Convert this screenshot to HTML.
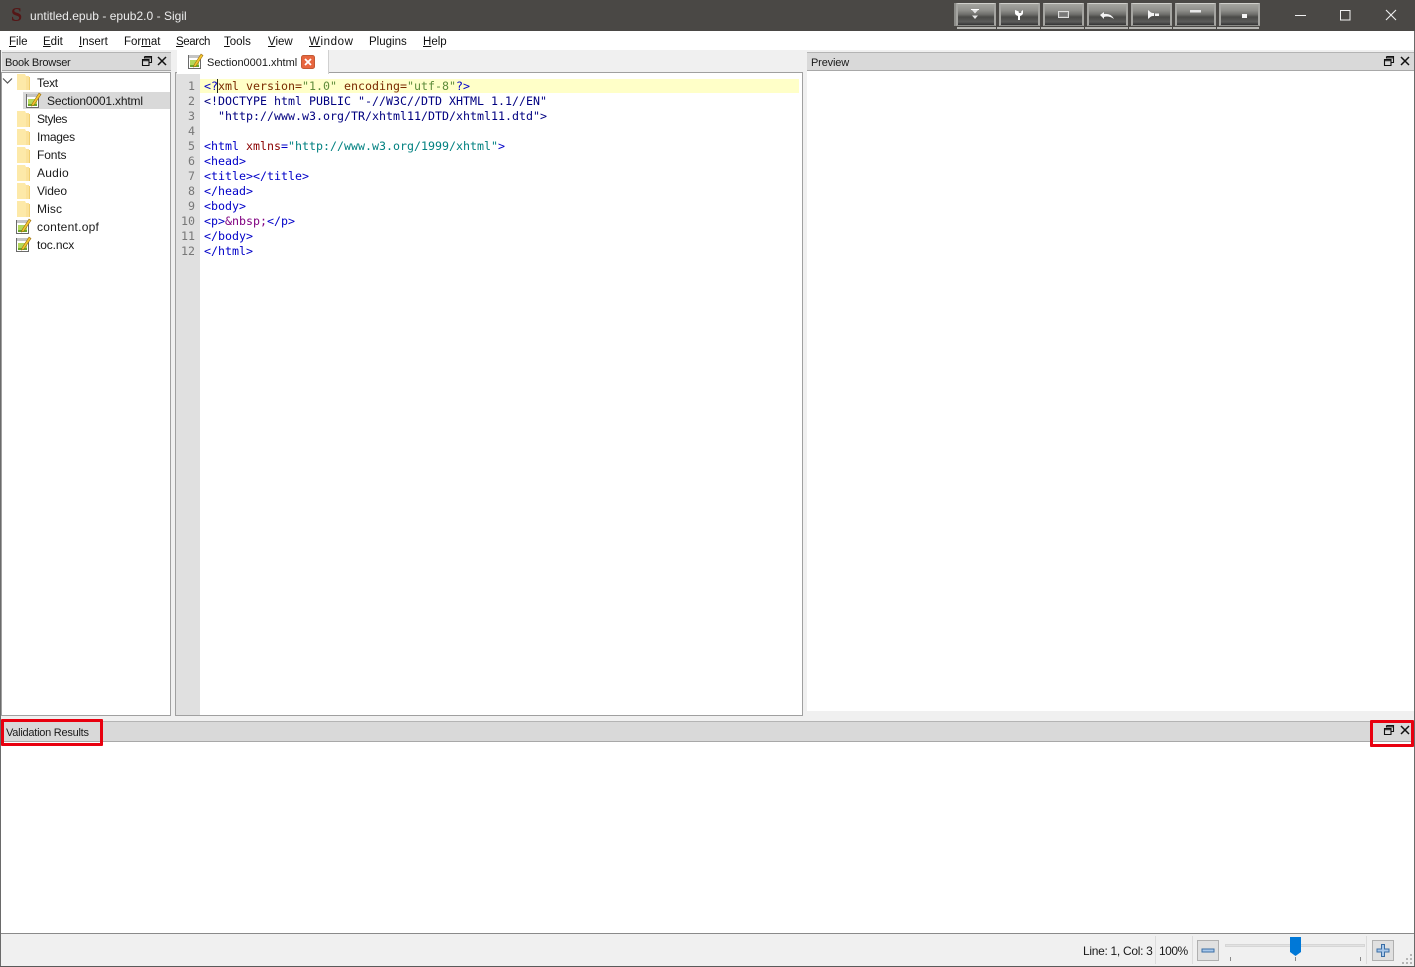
<!DOCTYPE html>
<html><head><meta charset="utf-8"><style>
html,body{margin:0;padding:0;width:1415px;height:967px;overflow:hidden;background:#f0f0f0;font-family:"Liberation Sans",sans-serif;font-size:12px;color:#1a1a1a}
.a{position:absolute}
.t{position:absolute;white-space:pre;line-height:16px;letter-spacing:-.12px}
.s{font-size:11px;letter-spacing:-.02px}
u{text-decoration:underline}
.m{position:absolute;top:34px;white-space:pre;line-height:16px;font-size:11.5px;color:#111}
.c{position:absolute;left:204px;white-space:pre;font-family:"DejaVu Sans Mono",monospace;font-size:11.63px;line-height:15px;color:#0000c8}
.n{position:absolute;left:176px;width:19px;text-align:right;font-family:"DejaVu Sans Mono",monospace;font-size:11.63px;line-height:15px;color:#777}
.r{color:#8a0000}.g{color:#008080}.o{color:#7a2a00}.v{color:#5f8c3a}.p{color:#800080}
.h{position:absolute;background:#d9d9d9;border-top:1px solid #b4b4b4;border-bottom:1px solid #a8a8a8}
.b{position:absolute;top:3px;height:23px;border:1px solid #8c8c88;border-top-color:#d0d0cc;border-left:2px solid #a5a5a1;border-right:2px solid #a5a5a1;box-sizing:border-box;background:linear-gradient(#a5a5a0 0,#8f8f8b 30%,#6e6e6b 50%,#4a4a48 62%,#5c5c5a 85%,#333 100%)}
.bs{position:absolute;top:27px;height:2px;background:#b5b5b1}
</style></head><body>
<svg width="0" height="0" style="position:absolute"><defs>
<symbol id="folder" viewBox="0 0 14 17"><path d="M0 1h8l1 2v14H0z" fill="#fde9a8"/><path d="M9 3l3 0v14H9z" fill="#fbe29a"/><path d="M12 4h1v13h-1z" fill="#f0cf72"/></symbol>
<symbol id="doc" viewBox="0 0 17 17"><path d="M1.500 2.500h12v13h-12z" fill="#fff" stroke="#6a6a6a"/><path d="M2 2h11v3H2z" fill="#c4c4c4"/><path d="M3 7h9v7H3z" fill="#b4d85a"/><path d="M3 12h9v2H3z" fill="#6ea52a"/><path d="M7 12l7-11 2 1.500-7 10.500-2.500 1z" fill="#f3c530" stroke="#9a6d10" stroke-width=".6"/></symbol>
<symbol id="fl" viewBox="0 0 12 12"><path d="M3.500 1.500h7v6h-2M3.500 1.500v2M3.500 2.800h7" fill="none" stroke="#111" stroke-width="1.100"/><path d="M1.500 4.500h6.500v6h-6.500z" fill="none" stroke="#111" stroke-width="1.100"/><path d="M1.500 5.700h6.500" stroke="#111"/></symbol>
<symbol id="cl" viewBox="0 0 12 12"><path d="M2 2l8 8M10 2l-8 8" stroke="#111" stroke-width="1.500"/></symbol>
</defs></svg>

<!-- title bar -->
<div class="a" style="left:0;top:0;width:1415px;height:31px;background:#4a4845"></div>
<div class="a" style="left:11px;top:5px;font-family:'Liberation Serif',serif;font-size:20px;line-height:20px;font-weight:bold;color:#551616">S</div>
<div class="t" style="left:30px;top:8px;color:#ececec;font-size:12px;letter-spacing:.02px">untitled.epub - epub2.0 - Sigil</div>

<div class="bs" style="left:957px;width:39px"></div><div class="bs" style="left:997px;width:43px"></div><div class="bs" style="left:1041px;width:43px"></div><div class="bs" style="left:1085px;width:43px"></div><div class="bs" style="left:1129px;width:43px"></div><div class="bs" style="left:1173px;width:43px"></div><div class="bs" style="left:1217px;width:42px"></div>
<div class="a" style="left:954px;top:3px;width:2px;height:23px;background:#8c8c88"></div>
<div class="b" style="left:956px;width:40px"></div><div class="b" style="left:999px;width:41px"></div><div class="b" style="left:1043px;width:41px"></div><div class="b" style="left:1087px;width:41px"></div><div class="b" style="left:1131px;width:41px"></div><div class="b" style="left:1175px;width:41px"></div><div class="b" style="left:1219px;width:41px"></div>
<svg class="a" style="left:950px;top:0" width="320" height="31">
<path d="M21.500 9.500h7l-3.500 4zM22 15.500h6l-3 3.500z" fill="#e4e4e4"/><path d="M21 9h8v1h-8z" fill="#fff"/>
<path d="M65 10v3q0 2 3 3v4h2v-4q3-1 3-3v-3l-1.800 1.500v1.500h-2.400v-1.500z" fill="#fff"/>
<path d="M108.500 11.500h10v6h-10z" fill="#8a8a87" stroke="#ddd"/><path d="M110 13h7v3h-7z" fill="#777"/>
<path d="M150 15l4-3v2q7-1 10 5q-5-3.500-10-2v2z" fill="#f4f4f4"/>
<path d="M198 10l3 2.500q1 .5 2 .5h1v3h-1q-1 0-2 .5l-3 2.500zM205 13.500h4v2.500h-4z" fill="#f4f4f4"/>
<path d="M240 10h11v2.500h-11z" fill="#e8e8e8"/>
<path d="M292 14h5v4h-5z" fill="#f4f4f4"/>
</svg>
<svg class="a" style="left:1285px;top:0" width="120" height="31">
<path d="M10 15.500h11" stroke="#f0f0f0"/><path d="M55.500 10.500h9.500v9.500h-9.500z" fill="none" stroke="#f0f0f0"/><path d="M101 10l10 10M111 10l-10 10" stroke="#f0f0f0" stroke-width="1.100"/>
</svg>

<!-- menu -->
<div class="a" style="left:0;top:31px;width:1415px;height:19px;background:#fff"></div>
<div class="m" style="left:9px"><u>F</u>ile</div><div class="m" style="left:43px"><u>E</u>dit</div><div class="m" style="left:79px"><u>I</u>nsert</div><div class="m" style="left:124px">For<u>m</u>at</div><div class="m" style="left:176px;letter-spacing:-.4px"><u>S</u>earch</div><div class="m" style="left:224px"><u>T</u>ools</div><div class="m" style="left:268px"><u>V</u>iew</div><div class="m" style="left:309px;letter-spacing:.6px"><u>W</u>indow</div><div class="m" style="left:369px">Plugins</div><div class="m" style="left:423px"><u>H</u>elp</div>

<!-- edges -->
<div class="a" style="left:0;top:50px;width:1px;height:917px;background:#6a6a6a"></div>
<div class="a" style="left:1414px;top:31px;width:1px;height:936px;background:#6a6a6a"></div>
<div class="a" style="left:0;top:966px;width:1415px;height:1px;background:#5a5a5a"></div>

<!-- book browser -->
<div class="h" style="left:2px;top:52px;width:169px;height:17px"></div>
<div class="t s" style="left:5px;top:55px;letter-spacing:-.25px">Book Browser</div>
<svg class="a" style="left:141px;top:55px" width="12" height="12"><use href="#fl"/></svg>
<svg class="a" style="left:156px;top:55px" width="12" height="12"><use href="#cl"/></svg>
<div class="a" style="left:1px;top:72px;width:168px;height:642px;background:#fff;border:1px solid #a0a0a0"></div>
<div class="a" style="left:23px;top:92px;width:147px;height:17px;background:#d9d9d9"></div>
<svg class="a" style="left:2px;top:77px" width="11" height="9"><path d="M1 1.500l4.500 4.500 4.500-4.500" fill="none" stroke="#555" stroke-width="1.200"/></svg>
<svg class="a" style="left:17px;top:73px" width="14" height="17"><use href="#folder"/></svg><div class="t" style="left:37px;top:75px;letter-spacing:-.3px">Text</div>
<svg class="a" style="left:25px;top:92px" width="17" height="17"><use href="#doc"/></svg><div class="t" style="left:47px;top:93px;letter-spacing:-.17px">Section0001.xhtml</div>
<svg class="a" style="left:17px;top:110px" width="14" height="17"><use href="#folder"/></svg><div class="t" style="left:37px;top:111px;letter-spacing:-.45px">Styles</div>
<svg class="a" style="left:17px;top:128px" width="14" height="17"><use href="#folder"/></svg><div class="t" style="left:37px;top:129px;letter-spacing:-.25px">Images</div>
<svg class="a" style="left:17px;top:146px" width="14" height="17"><use href="#folder"/></svg><div class="t" style="left:37px;top:147px">Fonts</div>
<svg class="a" style="left:17px;top:164px" width="14" height="17"><use href="#folder"/></svg><div class="t" style="left:37px;top:165px;letter-spacing:.25px">Audio</div>
<svg class="a" style="left:17px;top:182px" width="14" height="17"><use href="#folder"/></svg><div class="t" style="left:37px;top:183px">Video</div>
<svg class="a" style="left:17px;top:200px" width="14" height="17"><use href="#folder"/></svg><div class="t" style="left:37px;top:201px;letter-spacing:.1px">Misc</div>
<svg class="a" style="left:15px;top:218px" width="17" height="17"><use href="#doc"/></svg><div class="t" style="left:37px;top:219px;letter-spacing:.25px">content.opf</div>
<svg class="a" style="left:15px;top:236px" width="17" height="17"><use href="#doc"/></svg><div class="t" style="left:37px;top:237px">toc.ncx</div>

<!-- editor -->
<div class="a" style="left:175px;top:72px;width:626px;height:642px;background:#fff;border:1px solid #a0a0a0"></div>
<div class="a" style="left:176px;top:73px;width:24px;height:642px;background:#e0e0e0"></div>
<div class="a" style="left:177px;top:50px;width:151px;height:24px;background:#fff;border-right:1px solid #d0d0d0"></div>
<svg class="a" style="left:187px;top:53px" width="17" height="17"><use href="#doc"/></svg>
<div class="t s" style="left:207px;top:55px">Section0001.xhtml</div>
<svg class="a" style="left:301px;top:55px" width="14" height="14"><rect x=".5" y=".5" width="13" height="13" rx="2" fill="#e8663f" stroke="#c25a35"/><path d="M4 4l6 6M10 4l-6 6" stroke="#fff" stroke-width="1.800"/></svg>
<div class="a" style="left:200px;top:79px;width:599px;height:14px;background:#ffffc8"></div>
<div class="a" style="left:217px;top:79px;width:1px;height:14px;background:#222"></div>
<div class="n" style="top:79px">1</div><div class="n" style="top:94px">2</div><div class="n" style="top:109px">3</div><div class="n" style="top:124px">4</div><div class="n" style="top:139px">5</div><div class="n" style="top:154px">6</div><div class="n" style="top:169px">7</div><div class="n" style="top:184px">8</div><div class="n" style="top:199px">9</div><div class="n" style="top:214px">10</div><div class="n" style="top:229px">11</div><div class="n" style="top:244px">12</div>
<div class="c" style="top:79px">&lt;?<span class="o">xml version=</span><span class="v">"1.0"</span> <span class="o">encoding=</span><span class="v">"utf-8"</span>?&gt;</div>
<div class="c" style="top:94px;color:#000080">&lt;!DOCTYPE html PUBLIC "-//W3C//DTD XHTML 1.1//EN"</div>
<div class="c" style="top:109px;color:#000080">  "http://www.w3.org/TR/xhtml11/DTD/xhtml11.dtd"&gt;</div>
<div class="c" style="top:139px">&lt;html <span class="r">xmlns</span>=<span class="g">"http://www.w3.org/1999/xhtml"</span>&gt;</div>
<div class="c" style="top:154px">&lt;head&gt;</div>
<div class="c" style="top:169px">&lt;title&gt;&lt;/title&gt;</div>
<div class="c" style="top:184px">&lt;/head&gt;</div>
<div class="c" style="top:199px">&lt;body&gt;</div>
<div class="c" style="top:214px">&lt;p&gt;<span class="p">&amp;nbsp;</span>&lt;/p&gt;</div>
<div class="c" style="top:229px">&lt;/body&gt;</div>
<div class="c" style="top:244px">&lt;/html&gt;</div>

<!-- preview -->
<div class="h" style="left:807px;top:52px;width:607px;height:17px"></div>
<div class="t s" style="left:811px;top:55px;letter-spacing:-.15px">Preview</div>
<svg class="a" style="left:1383px;top:55px" width="12" height="12"><use href="#fl"/></svg>
<svg class="a" style="left:1399px;top:55px" width="12" height="12"><use href="#cl"/></svg>
<div class="a" style="left:807px;top:71px;width:607px;height:640px;background:#fff"></div>

<!-- validation -->
<div class="h" style="left:1px;top:721px;width:1413px;height:19px"></div>
<div class="t s" style="left:6px;top:725px;letter-spacing:-.25px">Validation Results</div>
<svg class="a" style="left:1383px;top:724px" width="12" height="12"><use href="#fl"/></svg>
<svg class="a" style="left:1399px;top:724px" width="12" height="12"><use href="#cl"/></svg>
<div class="a" style="left:1px;top:742px;width:1413px;height:191px;background:#fff;border-bottom:1px solid #8a8a8a"></div>
<div class="a" style="left:1px;top:719px;width:96px;height:21px;border:3px solid #e8000f;border-radius:1px"></div>
<div class="a" style="left:1370px;top:720px;width:38px;height:21px;border:3px solid #e8000f;border-radius:1px"></div>

<!-- status bar -->
<div class="t" style="left:1083px;top:943px;letter-spacing:-.3px">Line: 1, Col: 3</div>
<div class="t" style="left:1159px;top:943px;letter-spacing:-.5px">100%</div>
<div class="a" style="left:1155px;top:936px;width:1px;height:28px;background:#dcdcdc"></div>
<div class="a" style="left:1192px;top:936px;width:1px;height:28px;background:#dcdcdc"></div>
<div class="a" style="left:1366px;top:936px;width:1px;height:28px;background:#dcdcdc"></div>
<div class="a" style="left:1197px;top:940px;width:20px;height:19px;background:#e0e0e0;border:1px solid #b0b0b0"></div>
<svg class="a" style="left:1198px;top:941px" width="20" height="19"><path d="M4 8h12v3H4z" fill="#a9c8ea" stroke="#3a6ea5"/></svg>
<div class="a" style="left:1372px;top:940px;width:20px;height:19px;background:#e0e0e0;border:1px solid #b0b0b0"></div>
<svg class="a" style="left:1373px;top:941px" width="20" height="19"><path d="M8.500 3.500h3v4.500h4.500v3h-4.500v4.500h-3v-4.500H4v-3h4.500z" fill="#a9c8ea" stroke="#3a6ea5"/></svg>
<div class="a" style="left:1225px;top:944px;width:140px;height:3px;background:#e2e2e2;border:1px solid #d6d6d6;box-sizing:border-box"></div>
<svg class="a" style="left:1288px;top:936px" width="15" height="22"><path d="M2 1h11v15l-5.500 4-5.500-4z" fill="#0078d7"/></svg>
<div class="a" style="left:1230px;top:957px;width:1px;height:4px;background:#888"></div>
<div class="a" style="left:1295px;top:957px;width:1px;height:4px;background:#888"></div>
<div class="a" style="left:1360px;top:957px;width:1px;height:4px;background:#888"></div>
<svg class="a" style="left:1402px;top:953px" width="11" height="11"><g fill="#b5b5b5"><rect x="8" y="1" width="2" height="2"/><rect x="4" y="5" width="2" height="2"/><rect x="8" y="5" width="2" height="2"/><rect x="0" y="9" width="2" height="2"/><rect x="4" y="9" width="2" height="2"/><rect x="8" y="9" width="2" height="2"/></g></svg>
</body></html>
